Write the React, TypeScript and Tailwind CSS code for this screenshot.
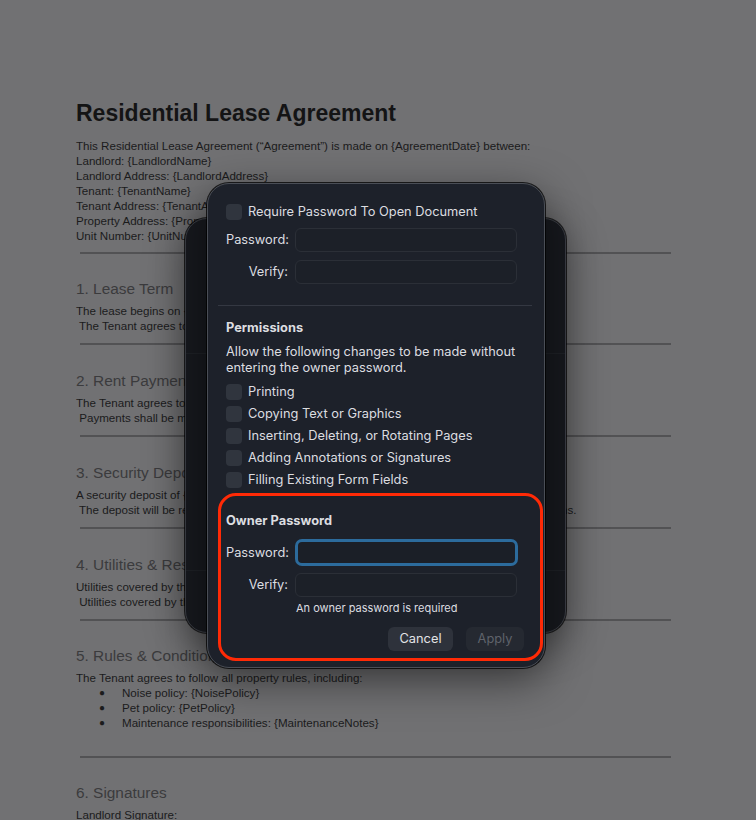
import React from "react";

const docFont = { fontFamily: '"Liberation Sans", Arial, sans-serif' };
const uiFont = { fontFamily: 'Inter, "Noto Sans", sans-serif' };

const sections = [
  {
    title: "1. Lease Term",
    lines: [
      "The lease begins on {StartDate} and ends on {EndDate}.",
      " The Tenant agrees to occupy the premises for the full term of this Agreement.",
    ],
  },
  {
    title: "2. Rent Payment",
    lines: [
      "The Tenant agrees to pay a monthly rent of {RentAmount} due on the {DueDate} of each month.",
      " Payments shall be made to {PaymentMethod}.",
    ],
  },
  {
    title: "3. Security Deposit",
    lines: [
      "A security deposit of {DepositAmount} is due upon signing.",
      " The deposit will be returned within {ReturnDays} days after move-out, less any lawful deductions.",
    ],
  },
  {
    title: "4. Utilities & Responsibilities",
    lines: [
      "Utilities covered by the Landlord: {LandlordUtilities}",
      " Utilities covered by the Tenant: {TenantUtilities}",
    ],
  },
];

function Rule() {
  return <div className="ml-[4px] w-[591px] h-[2px] bg-[#525254]" />;
}

function Line({ text }: { text: string }) {
  return <p className="text-[11.6px] leading-[15px] whitespace-pre text-[#1b1b1c]">{text}</p>;
}

function Heading({ text, wide = false }: { text: string; wide?: boolean }) {
  return (
    <h2 className={`text-[15.4px] leading-[17px] text-[#3b3b3d] mb-[6px] ${wide ? "mt-[27px]" : "mt-[26px]"}`}>
      {text}
    </h2>
  );
}

function Checkbox() {
  return <div className="w-[16px] h-[16px] rounded-[4px] bg-[#30353e] shrink-0" />;
}

function CheckRow({ label }: { label: string }) {
  return (
    <div className="flex items-center gap-[6px] h-[22px]">
      <Checkbox />
      <span className="text-[12.8px] text-[#dcdde0]">{label}</span>
    </div>
  );
}

function Field({ label, focused = false }: { label: string; focused?: boolean }) {
  return (
    <div className="flex items-center">
      <span className="w-[62px] text-right text-[12.8px] text-[#dcdde0]">{label}</span>
      {focused ? (
        <div className="ml-[7px] w-[223px] h-[27px] rounded-[7px] border-[3px] border-[#2c6b9c] bg-[#1b1f27]" />
      ) : (
        <div className="ml-[7px] w-[222px] h-[24px] rounded-[6px] border border-[#2b2f37] bg-[#1c2028]" />
      )}
    </div>
  );
}

export default function App() {
  return (
    <div className="relative w-[756px] h-[820px] overflow-hidden bg-[#717173]" style={docFont}>
      {/* document behind the sheet */}
      <div className="pl-[76px] pt-[99px]">
        <h1 className="text-[23px] leading-[28px] font-bold text-[#141415]">Residential Lease Agreement</h1>
        <div className="mt-[11px] mb-[9px]">
          <Line text="This Residential Lease Agreement (“Agreement”) is made on {AgreementDate} between:" />
          <Line text="Landlord: {LandlordName}" />
          <Line text="Landlord Address: {LandlordAddress}" />
          <Line text="Tenant: {TenantName}" />
          <Line text="Tenant Address: {TenantAddress}" />
          <Line text="Property Address: {PropertyAddress}" />
          <Line text="Unit Number: {UnitNumber}" />
        </div>
        <Rule />
        {sections.map((s, i) => (
          <div key={s.title}>
            <Heading text={s.title} wide={i > 0} />
            <div className="mb-[10px]">
              {s.lines.map((l) => (
                <Line key={l} text={l} />
              ))}
            </div>
            <Rule />
          </div>
        ))}
        <Heading text="5. Rules & Conditions" />
        <Line text="The Tenant agrees to follow all property rules, including:" />
        <ul className="mb-[26px]">
          {["Noise policy: {NoisePolicy}", "Pet policy: {PetPolicy}", "Maintenance responsibilities: {MaintenanceNotes}"].map((b) => (
            <li key={b} className="flex items-center text-[11.6px] leading-[15px] text-[#1b1b1c]">
              <span className="w-[46px] pl-[23px] text-[10px]">●</span>
              {b}
            </li>
          ))}
        </ul>
        <Rule />
        <Heading text="6. Signatures" />
        <Line text="Landlord Signature:" />
      </div>

      {/* sheet behind */}
      <div className="absolute left-[185px] top-[218px] w-[381px] h-[415px] rounded-[22px] bg-[#17191e] border border-[#3b3e45] shadow-[0_10px_40px_rgba(0,0,0,0.45),0_0_0_1px_rgba(0,0,0,0.7)] overflow-hidden">
        <div className="h-[134px]" />
        <div className="h-[217px] border-t border-[#1e2126]" />
        <div className="border-t border-[#1e2126]" />
      </div>

      {/* security sheet */}
      <div
        className="absolute left-[207px] top-[183px] w-[338px] h-[485px] rounded-[22px] bg-[#1d212a] border border-[#4a4e56] shadow-[0_12px_44px_rgba(0,0,0,0.5),0_0_0_1px_rgba(0,0,0,0.75)] flex flex-col pl-[18px] pt-[20px]"
        style={uiFont}
      >
        <div className="flex items-center gap-[6px] h-[16px]">
          <Checkbox />
          <span className="text-[12.8px] text-[#dcdde0]">Require Password To Open Document</span>
        </div>
        <div className="mt-[8px] flex flex-col gap-[8px]">
          <Field label="Password:" />
          <Field label="Verify:" />
        </div>
        <div className="mt-[21px] -ml-[8px] w-[314px] h-px bg-[#343842]" />
        <p className="mt-[14px] text-[12.8px] leading-[16px] font-bold text-[#dcdde0]">Permissions</p>
        <p className="mt-[8px] text-[12.8px] leading-[16px] text-[#dcdde0]">
          Allow the following changes to be made without
          <br />
          entering the owner password.
        </p>
        <div className="mt-[5px] flex flex-col">
          <CheckRow label="Printing" />
          <CheckRow label="Copying Text or Graphics" />
          <CheckRow label="Inserting, Deleting, or Rotating Pages" />
          <CheckRow label="Adding Annotations or Signatures" />
          <CheckRow label="Filling Existing Form Fields" />
        </div>

        {/* highlighted owner password block */}
        <div className="mt-[2px] -ml-[8px] w-[325px] h-[168px] rounded-[18px] border-[3px] border-[#ff2a06] pl-[5px] pr-[16px] pt-[17px] flex flex-col">
          <p className="text-[12.8px] leading-[16px] font-bold text-[#dcdde0]">Owner Password</p>
          <div className="mt-[10px]">
            <Field label="Password:" focused />
          </div>
          <div className="mt-[7px]">
            <Field label="Verify:" />
          </div>
          <p className="mt-[4px] ml-[70px] text-[11px] leading-[14px] text-[#dcdde0]">An owner password is required</p>
          <div className="mt-[12px] flex justify-end gap-[13px]">
            <button className="w-[65px] h-[24px] rounded-[6px] bg-[#2e323b] text-[12.8px] text-[#e2e3e6]">Cancel</button>
            <button className="w-[58px] h-[24px] rounded-[6px] bg-[#252931] text-[12.8px] text-[#5f636b]">Apply</button>
          </div>
        </div>
      </div>
    </div>
  );
}
